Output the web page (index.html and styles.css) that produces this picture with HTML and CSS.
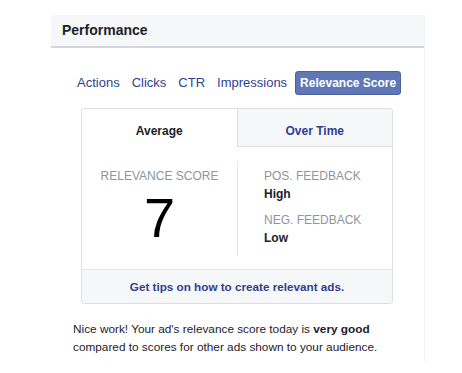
FILE: index.html
```html
<!DOCTYPE html>
<html lang="en">
<head>
    <meta charset="UTF-8">
    <title>Performance</title>
    <link rel="stylesheet" href="styles.css">
</head>
<body>
<div class="panel">
    <div class="panel-header">Performance</div>

    <div class="metric-tabs">
        <span class="metric">Actions</span>
        <span class="metric">Clicks</span>
        <span class="metric">CTR</span>
        <span class="metric">Impressions</span>
        <span class="metric active">Relevance Score</span>
    </div>

    <div class="score-card">
        <div class="card-tabs">
            <div class="card-tab selected">Average</div>
            <div class="card-tab">Over Time</div>
        </div>
        <div class="card-body">
            <div class="score">
                <div class="label">RELEVANCE SCORE</div>
                <div class="big-number">7</div>
            </div>
            <div class="feedback">
                <div class="label">POS. FEEDBACK</div>
                <div class="value">High</div>
                <div class="label neg">NEG. FEEDBACK</div>
                <div class="value">Low</div>
            </div>
        </div>
        <div class="card-footer">Get tips on how to create relevant ads.</div>
    </div>

    <p class="summary">Nice work! Your ad's relevance score today is <strong>very good</strong> compared to scores for other ads shown to your audience.</p>
</div>
</body>
</html>
```

FILE: styles.css
```css
body {
    margin: 0;
    background: #ffffff;
    font-family: 'Liberation Sans', Arial, Helvetica, sans-serif;
    color: #1d2129;
}

.panel {
    margin: 15px 0 0 51px;
    width: 373px;
    height: 347px;
    border-right: 1px solid #f2f3f5;
}

.panel-header {
    height: 31px;
    line-height: 30px;
    padding-left: 11px;
    background: #f6f7f9;
    border-bottom: 2px solid #d3d6db;
    font-size: 14px;
    font-weight: bold;
    color: #1d2129;
}

.metric-tabs {
    display: flex;
    align-items: center;
    gap: 4px;
    padding: 23px 0 0 22px;
    height: 24px;
}

.metric {
    padding: 0 4px;
    font-size: 13px;
    color: #2f3f8f;
    line-height: 22px;
}

.metric.active {
    background: #6077b6;
    border: 1px solid #4b61a3;
    border-radius: 3px;
    color: #ffffff;
    font-size: 12px;
    font-weight: bold;
    padding: 0 4px;
}

.score-card {
    margin: 13px 0 0 30px;
    width: 310px;
    border: 1px solid #dddfe2;
    border-radius: 3px;
    overflow: hidden;
}

.card-tabs {
    display: flex;
}

.card-tab {
    flex: 1;
    height: 33px;
    padding-top: 4px;
    line-height: 36px;
    text-align: center;
    font-size: 12px;
    font-weight: bold;
    color: #2f3f8f;
    background: #f6f7f9;
    border-bottom: 1px solid #dddfe2;
    border-left: 1px solid #dddfe2;
}

.card-tab.selected {
    background: #ffffff;
    color: #1d2129;
    border-bottom-color: #ffffff;
    border-left: none;
}

.card-body {
    display: flex;
    padding: 14px 0 13px;
}

.score {
    width: 155px;
    min-height: 95px;
    text-align: center;
    border-right: 1px solid #e5e6e9;
}

.label {
    font-size: 12px;
    color: #90949c;
    margin-top: 8px;
}

.big-number {
    font-size: 56px;
    font-weight: 300;
    line-height: 60px;
    color: #000000;
    margin-top: 5px;
}

.feedback {
    padding-left: 26px;
}

.label.neg {
    margin-top: 12px;
}

.value {
    font-size: 12px;
    font-weight: bold;
    margin-top: 4px;
}

.card-footer {
    height: 33px;
    line-height: 33px;
    text-align: center;
    background: #f6f7f9;
    border-top: 1px solid #e5e6e9;
    font-size: 11.7px;
    font-weight: bold;
    color: #2f3f8f;
}

.summary {
    margin: 16px 0 0 22px;
    font-size: 11.8px;
    line-height: 18px;
    width: 330px;
}

.summary strong {
    font-weight: bold;
}
```
